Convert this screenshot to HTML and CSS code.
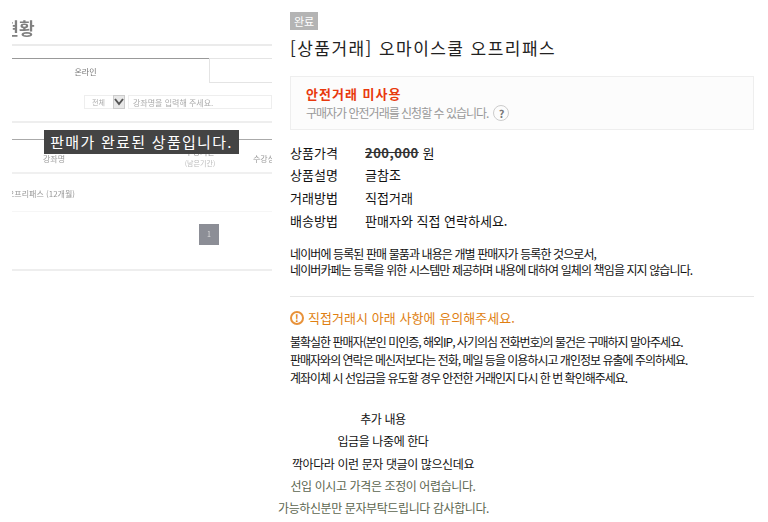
FILE: index.html
```html
<!DOCTYPE html>
<html lang="ko">

<head>
    <meta charset="UTF-8">
    <meta name="viewport" content="width=device-width, initial-scale=1.0">
    <title>오마이스쿨 오프리패스</title>
    <link rel="stylesheet" href="styles.css">
</head>

<body>
    <div class="page">
        <div class="thumb">
            <div class="shot">
                <div class="shot-title">수강현황</div>
                <div class="tabs">
                    <div class="tab-on">온라인</div>
                    <div class="tab-off"></div>
                </div>
                <div class="search">
                    <span class="sel">전체</span>
                    <span class="arrow">
                        <svg width="10" height="8" viewBox="0 0 10 8"><path d="M1 1l4 5 4-5" fill="none" stroke="#555" stroke-width="2"/></svg>
                    </span>
                    <span class="inp">강좌명을 입력해 주세요.</span>
                </div>
                <div class="rule"></div>
                <div class="thead">
                    <span class="th-name">강좌명</span>
                    <span class="th-date">수강기간<br><small>(남은기간)</small></span>
                    <span class="th-state">수강상태</span>
                </div>
                <div class="trow">오프리패스 (12개월)</div>
                <div class="pager"><span>1</span></div>
            </div>
            <div class="done">판매가 완료된 상품입니다.</div>
        </div>

        <div class="info">
            <span class="badge">완료</span>
            <h1 class="title">[상품거래] 오마이스쿨 오프리패스</h1>
            <div class="notice">
                <strong>안전거래 미사용</strong>
                <p>구매자가 안전거래를 신청할 수 있습니다. <i class="help">?</i></p>
            </div>
            <dl class="spec">
                <dt>상품가격</dt>
                <dd><del>200,000</del> 원</dd>
                <dt>상품설명</dt>
                <dd>글참조</dd>
                <dt>거래방법</dt>
                <dd>직접거래</dd>
                <dt>배송방법</dt>
                <dd>판매자와 직접 연락하세요.</dd>
            </dl>
            <p class="legal">네이버에 등록된 판매 물품과 내용은 개별 판매자가 등록한 것으로서,<br>네이버카페는 등록을 위한 시스템만 제공하며 내용에 대하여 일체의 책임을 지지 않습니다.</p>
            <div class="warn">
                <h2><i class="excl">!</i>직접거래시 아래 사항에 유의해주세요.</h2>
                <ul>
                    <li>불확실한 판매자(본인 미인증, 해외IP, 사기의심 전화번호)의 물건은 구매하지 말아주세요.</li>
                    <li>판매자와의 연락은 메신저보다는 전화, 메일 등을 이용하시고 개인정보 유출에 주의하세요.</li>
                    <li>계좌이체 시 선입금을 유도할 경우 안전한 거래인지 다시 한 번 확인해주세요.</li>
                </ul>
            </div>
            <div class="memo">
                <p>추가 내용</p>
                <p>입금을 나중에 한다</p>
                <p>깍아다라 이런 문자 댓글이 많으신데요</p>
                <p class="fade">선입 이시고 가격은 조정이 어렵습니다.</p>
                <p class="fade">가능하신분만 문자부탁드립니다 감사합니다.</p>
            </div>
        </div>
    </div>
</body>

</html>
```
FILE: styles.css
```css
* {
    box-sizing: border-box;
}

html,
body {
    margin: 0;
    padding: 0;
    height: 522px;
    overflow: hidden;
    background-color: #fff;
}

body {
    font-family: "Noto Sans CJK KR", "Liberation Sans", sans-serif;
    color: #111;
}

.page {
    display: flex;
    padding-left: 12px;
}

/* left product picture */
.thumb {
    position: relative;
    flex: none;
    width: 260px;
    height: 272px;
    margin-right: 18px;
    overflow: hidden;
}

.shot {
    height: 271px;
    color: #999;
    filter: blur(0.6px);
    border-bottom: 2px solid #eee;
}

.shot-title {
    height: 46px;
    padding-top: 14px;
    margin-left: -40px;
    font-size: 17px;
    line-height: 28px;
    font-weight: 700;
    color: #808080;
    border-bottom: 2px solid #ebebeb;
}

.tabs {
    display: flex;
    height: 25px;
    margin-top: 12px;
}

.tab-on {
    width: 197px;
    padding-top: 7px;
    padding-right: 50px;
    text-align: center;
    font-size: 8px;
    line-height: 12px;
    color: #777;
    border-top: 1px solid #999;
}

.tab-off {
    flex: 1;
    border-top: 1px solid #e4e4e4;
    border-left: 1px solid #e4e4e4;
    border-bottom: 1px solid #e4e4e4;
}

.search {
    display: flex;
    align-items: center;
    height: 14px;
    margin-top: 12px;
    margin-left: 72px;
    font-size: 7px;
    color: #aaa;
}

.sel {
    width: 29px;
    height: 14px;
    padding-left: 7px;
    line-height: 13px;
    border: 1px solid #eee;
    border-right: 0;
}

.arrow {
    display: flex;
    align-items: center;
    justify-content: center;
    width: 12px;
    height: 14px;
    margin-right: 3px;
    background-color: #e8e8e8;
    border: 1px solid #ccc;
}

.inp {
    flex: 1;
    height: 14px;
    padding-left: 4px;
    font-size: 8px;
    line-height: 13px;
    border: 1px solid #eee;
}

.rule {
    height: 2px;
    margin-top: 12px;
    background-color: #eee;
}

.thead {
    display: flex;
    height: 35px;
    margin-top: 16px;
    padding-top: 6px;
    font-size: 8px;
    line-height: 11px;
    border-top: 1px solid #aaa;
    border-bottom: 2px solid #f0f0f0;
}

.thead small {
    font-size: 7px;
    color: #bbb;
}

.th-name {
    flex: none;
    width: 153px;
    padding-top: 7px;
    padding-left: 31px;
}

.th-date {
    flex: none;
    width: 70px;
    text-align: center;
}

.th-state {
    flex: none;
    padding-left: 18px;
    padding-top: 7px;
    white-space: nowrap;
}

.trow {
    height: 38px;
    margin-left: -5px;
    padding-top: 14px;
    font-size: 8px;
    line-height: 12px;
    border-bottom: 1px solid #f6f6f6;
}

.pager {
    display: flex;
    margin-top: 12px;
    margin-left: 187px;
}

.pager span {
    width: 20px;
    height: 21px;
    font-size: 7px;
    line-height: 21px;
    text-align: center;
    color: #ddd;
    background-color: #8c8e96;
}

.done {
    position: absolute;
    top: 130px;
    left: 32px;
    width: 195px;
    height: 24px;
    font-size: 15px;
    line-height: 24px;
    text-align: center;
    letter-spacing: 1.3px;
    white-space: nowrap;
    color: #fff;
    background-color: #444;
}

/* right column */
.info {
    width: 464px;
    padding-top: 12px;
}

.badge {
    display: block;
    width: 28px;
    height: 18px;
    font-size: 11px;
    line-height: 18px;
    text-align: center;
    color: #fff;
    background-color: #b4b4b4;
}

.title {
    margin: 7px 0 0;
    font-size: 17px;
    line-height: 22px;
    font-weight: 400;
    letter-spacing: 1.45px;
    color: #222;
}

.notice {
    height: 54px;
    margin-top: 17px;
    padding: 7px 15px;
    background-color: #fcfcfc;
    border: 1px solid #eee;
}

.notice strong {
    display: block;
    font-size: 13px;
    line-height: 20px;
    letter-spacing: 1px;
    color: #e8390e;
}

.notice p {
    display: flex;
    align-items: center;
    margin: 0;
    height: 17px;
    font-size: 12px;
    letter-spacing: -1px;
    color: #999;
}

.help {
    flex: none;
    width: 16px;
    height: 16px;
    margin-left: 5px;
    font-size: 11px;
    font-style: normal;
    font-weight: 700;
    line-height: 14px;
    letter-spacing: 0;
    text-align: center;
    color: #777;
    border: 1px solid #ccc;
    border-radius: 50%;
}

.spec {
    display: grid;
    grid-template-columns: 75px 1fr;
    grid-auto-rows: 22.7px;
    margin: 11.5px 0 0;
    font-size: 13px;
    line-height: 22px;
}

.spec dd {
    margin: 0;
}

.spec del {
    font-weight: 700;
    letter-spacing: 0.5px;
    color: #333;
}

.legal {
    margin: 13.5px 0 0;
    font-size: 12px;
    line-height: 16px;
    letter-spacing: -0.9px;
}

.warn {
    margin-top: 18px;
    padding-top: 11px;
    border-top: 1px solid #e6e6e6;
}

.warn h2 {
    display: flex;
    align-items: center;
    margin: 0;
    height: 20px;
    font-size: 13px;
    font-weight: 400;
    letter-spacing: 0.05px;
    color: #e07f12;
}

.excl {
    flex: none;
    width: 14px;
    height: 14px;
    margin-right: 4px;
    font-size: 10px;
    font-style: normal;
    font-weight: 700;
    line-height: 10px;
    text-align: center;
    border: 2px solid #e8923a;
    border-radius: 50%;
}

.warn ul {
    margin: 5px 0 0;
    padding: 0;
}

.warn li {
    list-style: none;
    font-size: 12px;
    line-height: 18.2px;
    letter-spacing: -1px;
}

.memo {
    width: 210px;
    margin: 20.5px 0 0 -12px;
    font-size: 12px;
    line-height: 22.4px;
    letter-spacing: -0.4px;
    text-align: center;
    white-space: nowrap;
}

.memo p {
    margin: 0;
}

.memo .fade {
    color: #5c6650;
}
```
